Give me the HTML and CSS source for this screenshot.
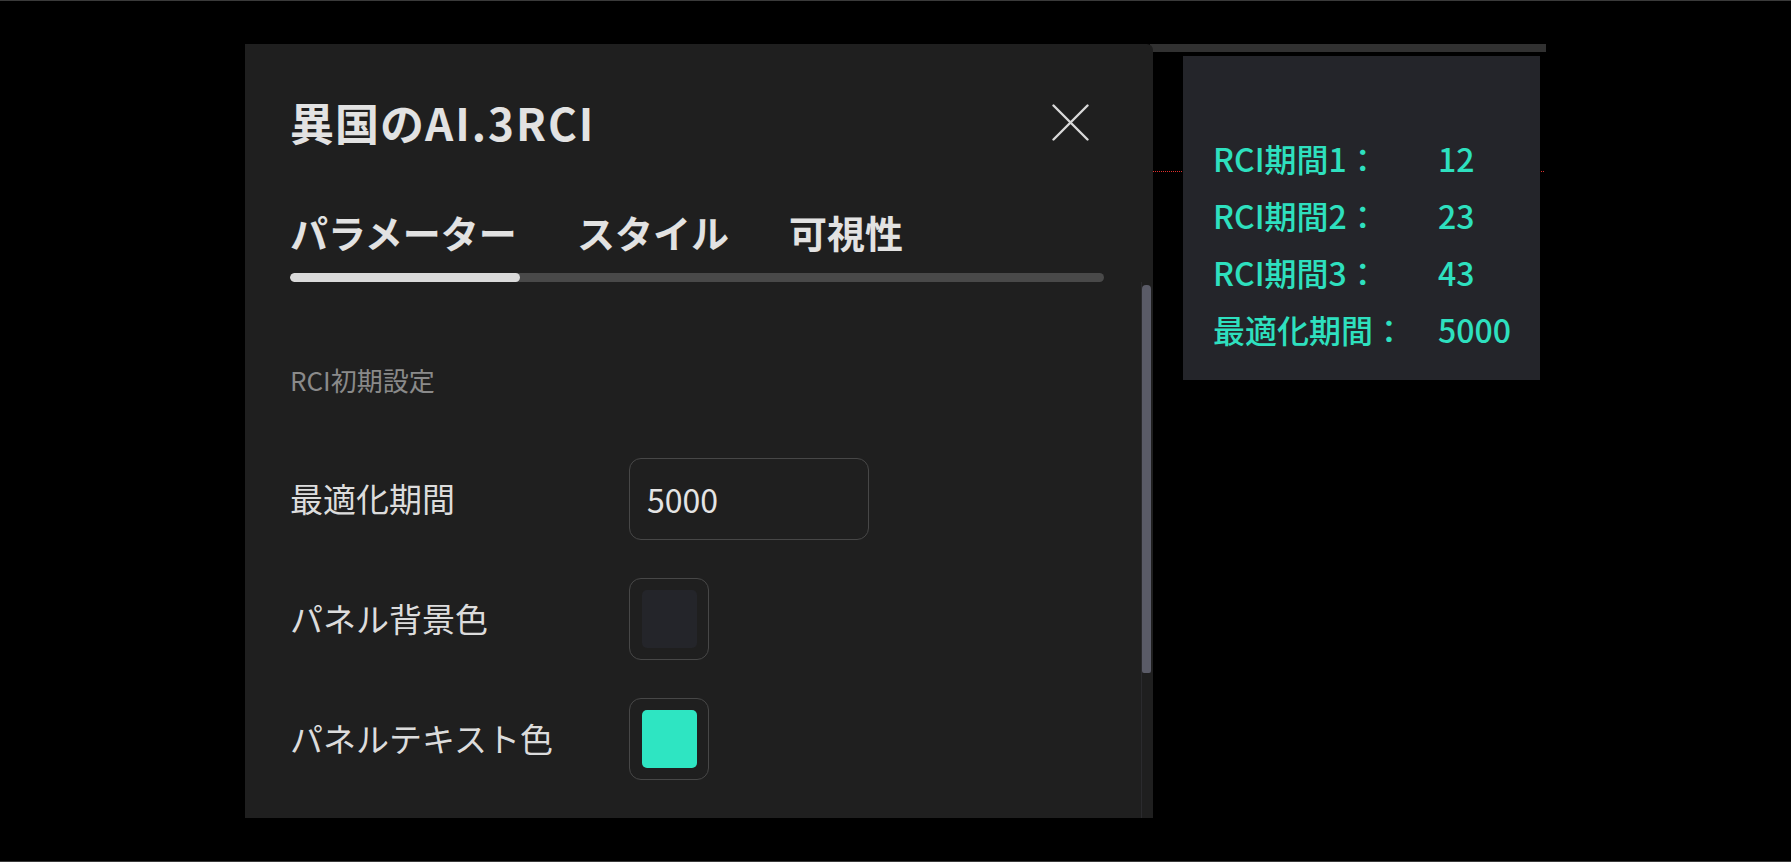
FILE: index.html
```html
<!DOCTYPE html>
<html lang="ja">
<head>
<meta charset="utf-8">
<title>異国のAI.3RCI</title>
<link rel="stylesheet" href="styles.css">
</head>
<body>
<div class="stage">
  <div class="chart">
    <div class="chart-top"></div>
    <div class="chart-dots"></div>
  </div>

  <aside class="info">
    <div class="info-grid">
      <span>RCI期間1：</span><span>12</span>
      <span>RCI期間2：</span><span>23</span>
      <span>RCI期間3：</span><span>43</span>
      <span>最適化期間：</span><span>5000</span>
    </div>
  </aside>

  <section class="dialog">
    <header class="dlg-head">
      <h1 class="dlg-title">異国の<span class="latin">AI.3RCI</span></h1>
      <button class="close" aria-label="閉じる">
        <svg width="37" height="37" viewBox="0 0 37 37"><path d="M1.5 1.5 L35.5 35.5 M35.5 1.5 L1.5 35.5" stroke="#d9d9d9" stroke-width="2.4" stroke-linecap="round" fill="none"/></svg>
      </button>
    </header>

    <nav class="tabs">
      <span class="tab">パラメーター</span>
      <span class="tab">スタイル</span>
      <span class="tab">可視性</span>
    </nav>
    <div class="tab-track"><div class="tab-active"></div></div>

    <div class="dlg-body">
      <div class="dlg-scroll">
        <div class="section-label">RCI初期設定</div>
        <div class="rows">
          <div class="row">
            <div class="row-label">最適化期間</div>
            <div class="input">5000</div>
          </div>
          <div class="row">
            <div class="row-label">パネル背景色</div>
            <div class="swatch"><div class="swatch-fill swatch-dark"></div></div>
          </div>
          <div class="row">
            <div class="row-label">パネルテキスト色</div>
            <div class="swatch"><div class="swatch-fill swatch-teal"></div></div>
          </div>
        </div>
      </div>
      <div class="scrollbar"><div class="thumb"></div></div>
    </div>
  </section>
</div>
</body>
</html>
```

FILE: styles.css
```css
* { box-sizing: border-box; }

html, body {
  margin: 0;
  padding: 0;
  background: #000;
}

body {
  font-family: "Noto Sans CJK JP", "Noto Sans", sans-serif;
  color: #dcdcdc;
}

.stage {
  position: relative;
  width: 1791px;
  height: 862px;
  background: #000;
  border-top: 1px solid #3a3a3a;
  border-bottom: 1px solid #3a3a3a;
  overflow: hidden;
}

/* chart canvas behind the overlays */
.chart {
  position: absolute;
  left: 1150px;
  top: 43px;
  width: 396px;
  height: 340px;
}

.chart-top {
  height: 8px;
  background: #313131;
}

.chart-dots {
  position: absolute;
  left: 2px;
  right: 2px;
  top: 127px;
  border-top: 1px dotted #e0302c;
}

/* info panel */
.info {
  position: absolute;
  left: 1183px;
  top: 55px;
  width: 357px;
  height: 324px;
  background: #24252a;
  padding: 73px 0 0 30px;
}

.info-grid {
  display: grid;
  grid-template-columns: 225px auto;
  grid-auto-rows: 57px;
  align-items: center;
  font-size: 32px;
  line-height: 40px;
  font-weight: 500;
  color: #2ee0bf;
}

/* dialog */
.dialog {
  position: absolute;
  left: 245px;
  top: 43px;
  width: 908px;
  height: 774px;
  background: #1f1f1f;
  border-top-right-radius: 6px;
  display: flex;
  flex-direction: column;
  padding-left: 45px;
  overflow: hidden;
}

.dlg-head {
  margin-top: 43px;
  height: 70px;
  padding-right: 64px;
  display: flex;
  align-items: center;
  justify-content: space-between;
}

.dlg-title {
  margin: 0;
  font-size: 44px;
  line-height: 70px;
  font-weight: 700;
  color: #e2e2e2;
  letter-spacing: 1px;
}

.dlg-title .latin {
  letter-spacing: 2px;
}

.close {
  width: 37px;
  height: 37px;
  padding: 0;
  border: 0;
  background: none;
  display: flex;
}

.tabs {
  margin-top: 51px;
  display: flex;
  gap: 60px;
  font-size: 38px;
  line-height: 48px;
  font-weight: 700;
  color: #e2e2e2;
}

.tab-track {
  margin-top: 17px;
  margin-right: 49px;
  height: 9px;
  border-radius: 5px;
  background: #494949;
  overflow: hidden;
}

.tab-active {
  width: 230px;
  height: 100%;
  border-radius: 5px;
  background: #dadada;
}

.dlg-body {
  flex: 1;
  display: flex;
  min-height: 0;
}

.dlg-scroll {
  flex: 1;
  padding-top: 81px;
}

.section-label {
  font-size: 26px;
  line-height: 34px;
  color: #8a8a8a;
}

.rows {
  margin-top: 61px;
  display: flex;
  flex-direction: column;
  gap: 38px;
}

.row {
  display: flex;
  align-items: center;
  height: 82px;
}

.row-label {
  width: 339px;
  font-size: 33px;
  line-height: 44px;
  color: #dcdcdc;
  padding-bottom: 2px;
}

.input {
  width: 240px;
  height: 82px;
  border: 1.5px solid #474747;
  border-radius: 12px;
  padding-left: 17px;
  display: flex;
  align-items: center;
  font-size: 32px;
  color: #e4e4e4;
}

.swatch {
  width: 80px;
  height: 82px;
  border: 1.5px solid #474747;
  border-radius: 12px;
  padding: 11px 11px 11px 12px;
}

.swatch-fill {
  width: 100%;
  height: 100%;
  border-radius: 5px;
}

.swatch-dark { background: #24252a; }
.swatch-teal { background: #2ee5c2; }

.scrollbar {
  width: 12px;
  border-left: 1px solid #2b2b2e;
  padding-top: 3px;
}

.thumb {
  width: 9px;
  height: 388px;
  border-radius: 4px 4px 2px 2px;
  background: #5a5b67;
}
```
